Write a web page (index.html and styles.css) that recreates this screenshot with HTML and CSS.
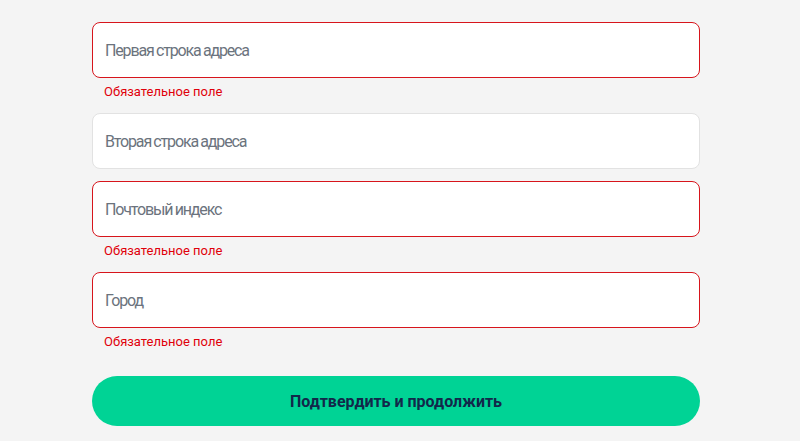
FILE: index.html
```html
<!DOCTYPE html>
<html lang="ru">
<head>
<meta charset="utf-8">
<link rel="stylesheet" href="styles.css">
</head>
<body>
<form class="form">
  <div class="field">
    <input class="input input--error" type="text" placeholder="Первая строка адреса">
    <div class="error">Обязательное поле</div>
  </div>
  <div class="field">
    <input class="input" type="text" placeholder="Вторая строка адреса">
  </div>
  <div class="field">
    <input class="input input--error" type="text" placeholder="Почтовый индекс">
    <div class="error">Обязательное поле</div>
  </div>
  <div class="field">
    <input class="input input--error" type="text" placeholder="Город">
    <div class="error">Обязательное поле</div>
  </div>
  <button class="submit" type="button">Подтвердить и продолжить</button>
</form>
</body>
</html>
```
FILE: styles.css
```css
html, body {
  margin: 0;
  padding: 0;
  background: #f4f4f4;
  font-family: Roboto, "Noto Sans", sans-serif;
}
.form {
  width: 608px;
  margin: 0 0 0 92px;
  padding-top: 22px;
  display: flex;
  flex-direction: column;
  gap: 12px;
}
.field {
  display: flex;
  flex-direction: column;
}
.input {
  box-sizing: border-box;
  height: 56px;
  width: 100%;
  border: 1px solid #e2e2e2;
  border-radius: 8px;
  background: #fff;
  padding: 0 12px;
  font-family: inherit;
  font-size: 16px;
  letter-spacing: -1.15px;
  word-spacing: -0.5px;
  color: #222;
  outline: none;
}
.input::placeholder {
  color: #6b737d;
}
.input--error {
  border-color: #d7151c;
}
.error {
  margin-top: 5px;
  padding-left: 12px;
  font-size: 13px;
  line-height: 18px;
  color: #e0000b;
}
.submit {
  margin-top: 13px;
  height: 50px;
  border: none;
  border-radius: 25px;
  background: #00d395;
  color: #12284a;
  font-family: inherit;
  font-size: 16px;
  font-weight: 700;
  cursor: pointer;
}
```
